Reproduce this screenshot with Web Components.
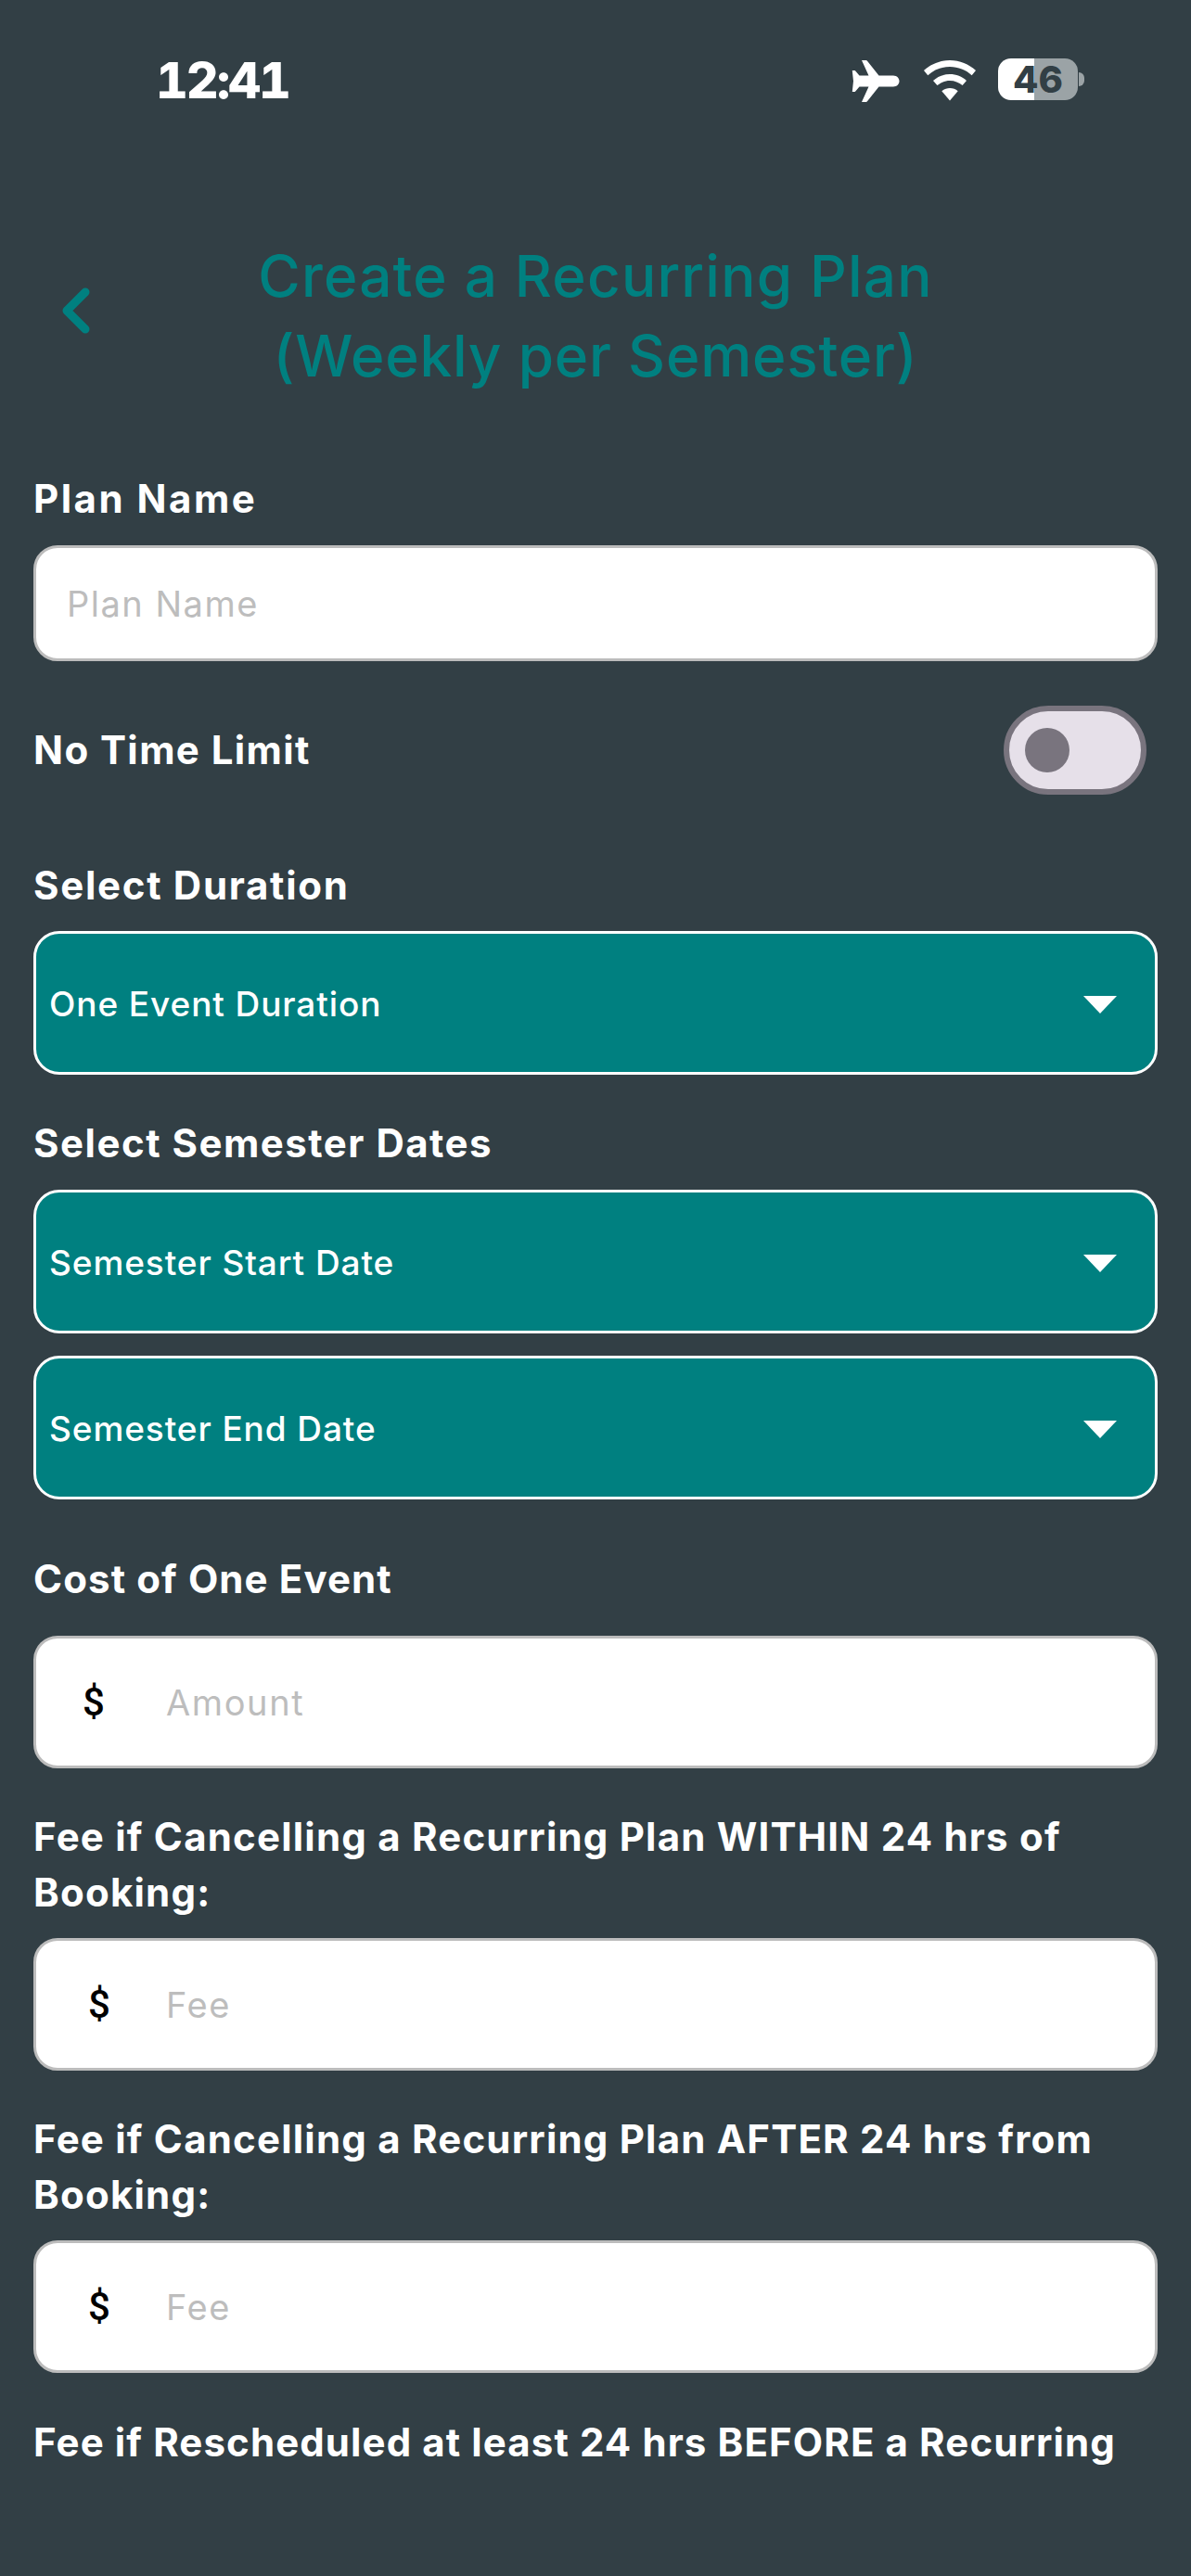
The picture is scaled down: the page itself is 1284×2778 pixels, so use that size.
<!DOCTYPE html>
<html>
<head>
<meta charset="utf-8">
<title>Create a Recurring Plan</title>
<style>
  html, body { margin: 0; padding: 0; background: #323f45; }
  body { height: 2778px; overflow: hidden; font-family: Inter, "Open Sans", sans-serif; }
</style>
</head>
<body>
<status-bar time="12:41" battery="46"></status-bar>
<page-header>Create a Recurring Plan<br><span style="letter-spacing:0.8px">(Weekly per Semester)</span></page-header>
<plan-form>
  <field-label style="margin-top:81px;letter-spacing:2.5px">Plan Name</field-label>
  <text-field style="margin-top:20px" placeholder="Plan Name"></text-field>
  <toggle-row style="margin-top:48px;letter-spacing:1.4px">No Time Limit</toggle-row>
  <field-label style="margin-top:68px;letter-spacing:1.7px">Select Duration</field-label>
  <select-field style="margin-top:19px">One Event Duration</select-field>
  <field-label style="margin-top:44px;letter-spacing:1.5px">Select Semester Dates</field-label>
  <select-field style="margin-top:20px">Semester Start Date</select-field>
  <select-field style="margin-top:24px">Semester End Date</select-field>
  <field-label style="margin-top:56px">Cost of One Event</field-label>
  <money-field style="margin-top:31px;--sign-left:50px" placeholder="Amount"></money-field>
  <field-label style="margin-top:44px;letter-spacing:1.2px">Fee if Cancelling a Recurring Plan WITHIN 24 hrs of Booking:</field-label>
  <money-field style="margin-top:19px" placeholder="Fee"></money-field>
  <field-label style="margin-top:44px;letter-spacing:1.2px">Fee if Cancelling a Recurring Plan AFTER 24 hrs from Booking:</field-label>
  <money-field style="margin-top:19px" placeholder="Fee"></money-field>
  <field-label style="margin-top:45px">Fee if Rescheduled at least 24 hrs BEFORE a Recurring</field-label>
</plan-form>

<script>
class StatusBar extends HTMLElement {
  constructor() {
    super();
    this.shadow = this.attachShadow({ mode: 'open' });
  }
  connectedCallback() {
    const time = this.getAttribute('time');
    const battery = this.getAttribute('battery');
    this.shadow.innerHTML = `
    <style>
      :host { display: flex; height: 174px; align-items: flex-start; justify-content: space-between; color: #fff; }
      .time { margin: 54px 0 0 168px; font: 800 54px/66px Inter, sans-serif; font-variant-numeric: tabular-nums; letter-spacing: -2px; }
      .icons { display: flex; align-items: flex-start; margin: 63px 115px 0 0; }
      .plane { width: 52px; height: 46px; margin-top: 2px; }
      .wifi { width: 58px; height: 44px; margin: 2px 0 0 25px; }
      .battery { display: flex; width: 86px; height: 45px; margin-left: 23px; border-radius: 14px; overflow: hidden;
        background: linear-gradient(90deg, #fff 0 39px, #9ba3a6 39px); color: #323f45;
        align-items: center; justify-content: center; font: 800 40px/45px Inter, sans-serif; }
      .nub { width: 6px; height: 15px; margin: 15px 0 0 1px; background: #9ba3a6; border-radius: 0 6px 6px 0; }
    </style>
    <div class="time">${time}</div>
    <div class="icons">
      <svg class="plane" viewBox="0 0 52 46"><path fill="#fff" d="M11 0h4.500a2 2 0 0 1 1.700 1L29.500 16.500H45c4 0 6.500 2.900 6.500 6s-2.500 6-6.500 6H29.500L17.200 44a2 2 0 0 1-1.700 1H11l7.500-16.500H8.500L3.800 34H.8L2 22.500.8 11h3l4.700 5.500h10z"/></svg>
      <svg class="wifi" viewBox="0 0 58 44"><path fill="#fff" d="M29 0c10.800 0 20.600 4.200 28 11l-4.300 5.200C46.500 10.500 38.100 7 29 7S11.500 10.500 5.300 16.200L1 11C8.400 4.200 18.200 0 29 0z"/><path fill="#fff" d="M29 15c6.900 0 13.200 2.600 18 6.900l-4.400 5.200C39 24 34.200 22 29 22s-10 2-13.600 5.100L11 21.900C15.800 17.600 22.100 15 29 15z"/><path fill="#fff" d="M29 30c3.300 0 6.300 1.200 8.700 3.200L29 43.500l-8.700-10.300C22.700 31.200 25.700 30 29 30z"/></svg>
      <div class="battery">${battery}</div>
      <div class="nub"></div>
    </div>
    `;
  }
}

class PageHeader extends HTMLElement {
  constructor() {
    super();
    this.shadow = this.attachShadow({ mode: 'open' });
  }
  connectedCallback() {
    this.shadow.innerHTML = `
    <style>
      :host { display: grid; grid-template-columns: 1fr; margin-top: 81px; color: #008080; }
      .back { grid-area: 1 / 1; justify-self: start; width: 30px; height: 50px; margin: 55px 0 0 67px; overflow: visible; }
      .title { grid-area: 1 / 1; text-align: center; font: 500 62px/86px Inter, sans-serif; letter-spacing: 1.2px; }
    </style>
    <svg class="back" viewBox="0 0 30 50"><path d="M25 5 5 25l20 20" fill="none" stroke="#008080" stroke-width="9" stroke-linecap="round" stroke-linejoin="round"/></svg>
    <div class="title"><slot></slot></div>
    `;
  }
}

class PlanForm extends HTMLElement {
  constructor() {
    super();
    this.shadow = this.attachShadow({ mode: 'open' });
  }
  connectedCallback() {
    this.shadow.innerHTML = `
    <style>
      :host { display: flex; flex-direction: column; padding: 0 36px; }
    </style>
    <slot></slot>
    `;
  }
}

class FieldLabel extends HTMLElement {
  constructor() {
    super();
    this.shadow = this.attachShadow({ mode: 'open' });
  }
  connectedCallback() {
    this.shadow.innerHTML = `
    <style>
      :host { display: block; color: #fff; font: 700 42px/60px Inter, sans-serif; letter-spacing: 1.1px; }
    </style>
    <slot></slot>
    `;
  }
}

class TextField extends HTMLElement {
  constructor() {
    super();
    this.shadow = this.attachShadow({ mode: 'open' });
  }
  connectedCallback() {
    this.shadow.innerHTML = `
    <style>
      :host { display: flex; align-items: center; box-sizing: border-box; height: 125px; padding-left: 33px;
        background: #fff; border: 3px solid #bcbcbc; border-radius: 26px; }
      span { color: #bdbdbd; font: 400 38px/50px Inter, sans-serif; letter-spacing: 1.5px; }
    </style>
    <span>${this.getAttribute('placeholder')}</span>
    `;
  }
}

class MoneyField extends HTMLElement {
  constructor() {
    super();
    this.shadow = this.attachShadow({ mode: 'open' });
  }
  connectedCallback() {
    this.shadow.innerHTML = `
    <style>
      :host { display: flex; align-items: center; box-sizing: border-box; height: 143px;
        background: #fff; border: 3px solid #bcbcbc; border-radius: 26px; }
      .sign { width: calc(140px - var(--sign-left, 56px)); margin-left: var(--sign-left, 56px); color: #000; font: 500 42px/50px Roboto, sans-serif; }
      .hint { color: #bdbdbd; font: 400 38px/50px Inter, sans-serif; letter-spacing: 1.6px; }
    </style>
    <span class="sign">$</span>
    <span class="hint">${this.getAttribute('placeholder')}</span>
    `;
  }
}

class SelectField extends HTMLElement {
  constructor() {
    super();
    this.shadow = this.attachShadow({ mode: 'open' });
  }
  connectedCallback() {
    this.shadow.innerHTML = `
    <style>
      :host { display: flex; align-items: center; justify-content: space-between; box-sizing: border-box; height: 155px;
        padding: 2px 41px 0 14px; background: #008080; border: 3px solid #fff; border-radius: 28px; color: #fff;
        font: 500 37px/50px Inter, sans-serif; letter-spacing: 0.9px; }
      svg { width: 36px; height: 19px; margin-top: 2px; }
    </style>
    <span><slot></slot></span>
    <svg viewBox="0 0 36 19"><path fill="#fff" d="M0 0h36L18 19z"/></svg>
    `;
  }
}

class ToggleRow extends HTMLElement {
  constructor() {
    super();
    this.shadow = this.attachShadow({ mode: 'open' });
  }
  connectedCallback() {
    this.shadow.innerHTML = `
    <style>
      :host { display: flex; align-items: center; justify-content: space-between; height: 96px; color: #fff;
        font: 700 42px/60px Inter, sans-serif; letter-spacing: 1.1px; }
      .track { display: flex; align-items: center; box-sizing: border-box; width: 154px; height: 96px; margin-right: 12px;
        padding-left: 17px; background: #e6e0e9; border: 6px solid #79747e; border-radius: 48px; }
      .knob { width: 48px; height: 48px; background: #79747e; border-radius: 50%; }
    </style>
    <span><slot></slot></span>
    <div class="track"><div class="knob"></div></div>
    `;
  }
}

customElements.define('status-bar', StatusBar);
customElements.define('page-header', PageHeader);
customElements.define('plan-form', PlanForm);
customElements.define('field-label', FieldLabel);
customElements.define('text-field', TextField);
customElements.define('money-field', MoneyField);
customElements.define('select-field', SelectField);
customElements.define('toggle-row', ToggleRow);
</script>
</body>
</html>
